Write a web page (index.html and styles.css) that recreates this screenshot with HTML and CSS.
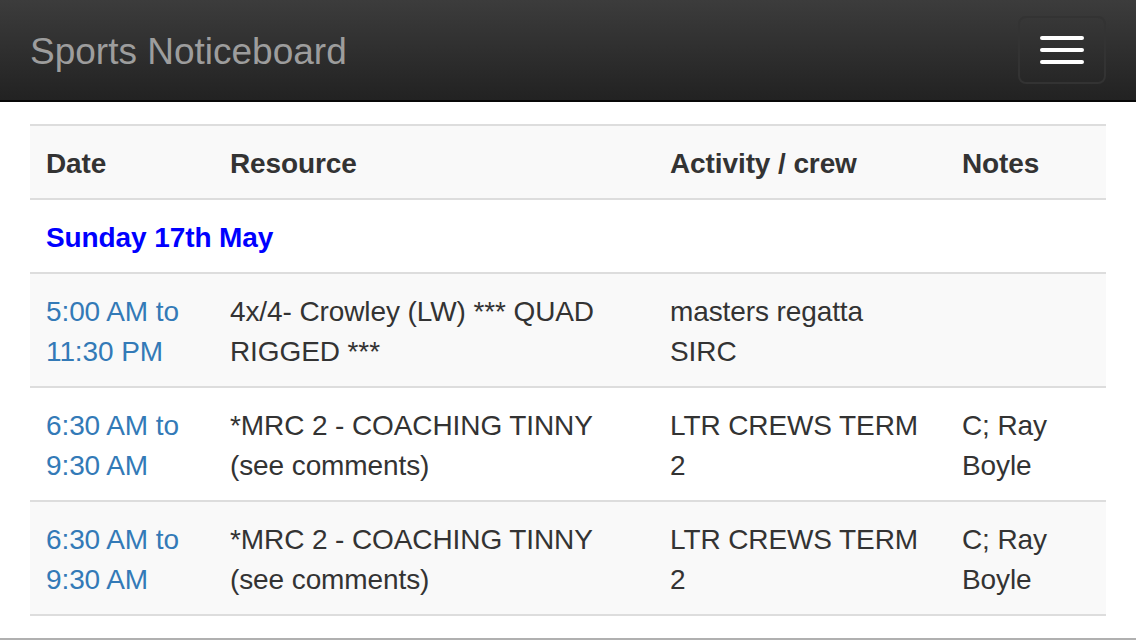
FILE: index.html
```html
<!DOCTYPE html>
<html lang="en">
<head>
    <meta charset="UTF-8">
    <meta name="viewport" content="width=device-width, initial-scale=1.0">
    <title>Sports Noticeboard</title>
    <link rel="stylesheet" href="styles.css">
</head>
<body>
    <div class="navbar">
        <a class="brand" href="#">Sports Noticeboard</a>
        <button class="toggle" type="button">
            <span class="icon-bar"></span>
            <span class="icon-bar"></span>
            <span class="icon-bar"></span>
        </button>
    </div>

    <div class="container">
        <table class="bookings">
            <colgroup>
                <col class="col-date">
                <col class="col-resource">
                <col class="col-activity">
                <col class="col-notes">
            </colgroup>
            <thead>
                <tr>
                    <th>Date</th>
                    <th>Resource</th>
                    <th>Activity / crew</th>
                    <th>Notes</th>
                </tr>
            </thead>
            <tbody>
                <tr class="day-row">
                    <td colspan="4">Sunday 17th May</td>
                </tr>
                <tr class="striped">
                    <td><a href="#">5:00 AM to 11:30 PM</a></td>
                    <td>4x/4- Crowley (LW) *** QUAD RIGGED ***</td>
                    <td>masters regatta SIRC</td>
                    <td></td>
                </tr>
                <tr>
                    <td><a href="#">6:30 AM to 9:30 AM</a></td>
                    <td>*MRC 2 - COACHING TINNY (see comments)</td>
                    <td>LTR CREWS TERM 2</td>
                    <td>C; Ray Boyle</td>
                </tr>
                <tr class="striped">
                    <td><a href="#">6:30 AM to 9:30 AM</a></td>
                    <td>*MRC 2 - COACHING TINNY (see comments)</td>
                    <td>LTR CREWS TERM 2</td>
                    <td>C; Ray Boyle</td>
                </tr>
            </tbody>
        </table>
    </div>

    <div class="footer"></div>
</body>
</html>
```

FILE: styles.css
```css
body {
    font-family: "Liberation Sans", Arial, sans-serif;
    font-size: 28px;
    line-height: 40px;
    color: #333;
    background-color: #fff;
    margin: 0;
    padding: 0;
}
.navbar {
    display: flex;
    align-items: flex-start;
    justify-content: space-between;
    height: 100px;
    padding: 0 30px;
    background-image: linear-gradient(#3c3c3c, #222);
    border-bottom: 2px solid #080808;
}
.brand {
    font-size: 37px;
    line-height: 104px;
    color: #9d9d9d;
    text-decoration: none;
}
.toggle {
    display: flex;
    flex-direction: column;
    gap: 8px;
    margin-top: 16px;
    padding: 18px 20px;
    background: transparent;
    border: 2px solid #333;
    border-radius: 8px;
}
.icon-bar {
    display: block;
    width: 44px;
    height: 4px;
    border-radius: 2px;
    background-color: #fff;
}
.container {
    padding: 22px 30px;
}
.bookings {
    width: 100%;
    table-layout: fixed;
    border-collapse: collapse;
    border-bottom: 2px solid #ddd;
}
.col-date {
    width: 184px;
}
.col-resource {
    width: 440px;
}
.col-activity {
    width: 292px;
}
.bookings th,
.bookings td {
    padding: 18px 16px 14px;
    text-align: left;
    vertical-align: top;
    border-top: 2px solid #ddd;
    letter-spacing: -0.1px;
}
.bookings thead tr {
    background-color: #f9f9f9;
}
.bookings th {
    font-weight: bold;
}
.day-row td {
    font-weight: bold;
    color: #00f;
}
.striped {
    background-color: #f9f9f9;
}
.bookings a {
    color: #337ab7;
    text-decoration: none;
}
.footer {
    border-top: 2px solid #b0b0b0;
}
```
